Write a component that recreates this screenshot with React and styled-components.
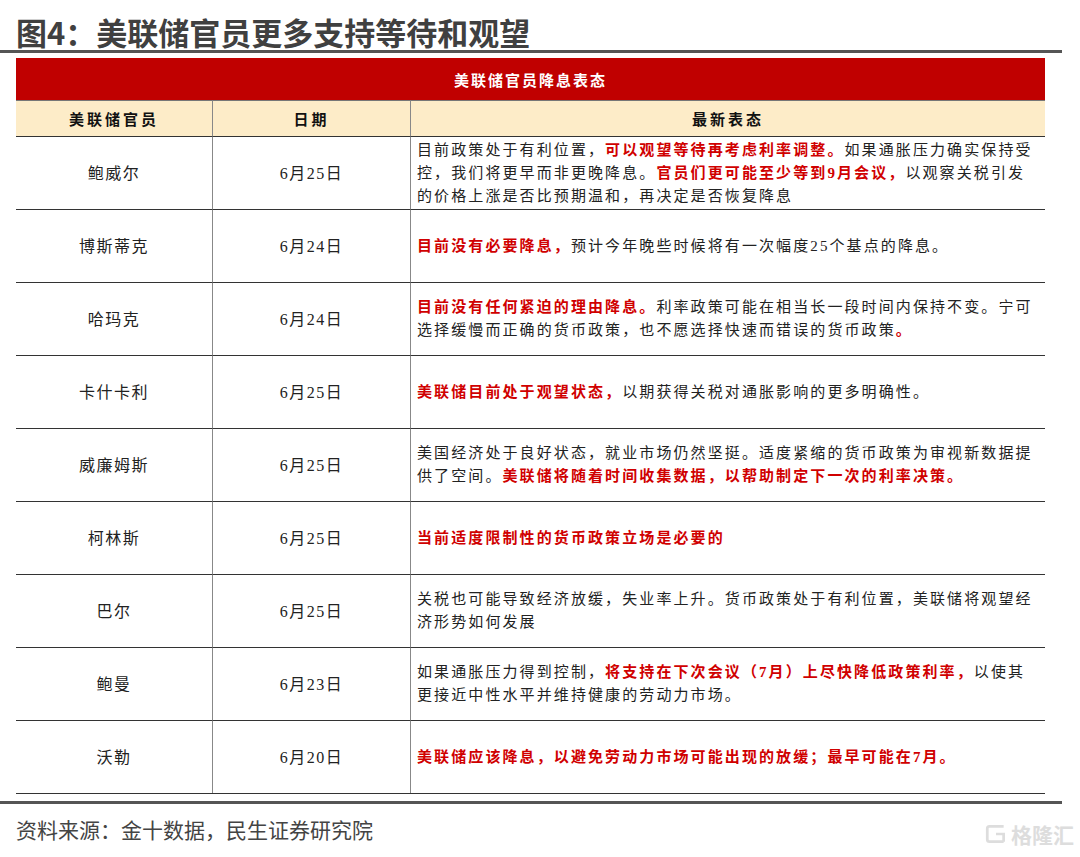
import styled, { createGlobalStyle } from "styled-components";

const Global = createGlobalStyle`
  body { margin: 0; background: #fff; font-family: "Liberation Serif", "Noto Sans CJK SC", serif; }
`;

const rows = [
  ["鲍威尔", "6月25日", [["目前政策处于有利位置，"], ["可以观望等待再考虑利率调整。", 1], ["如果通胀压力确实保持受控，我们将更早而非更晚降息。"], ["官员们更可能至少等到9月会议，", 1], ["以观察关税引发的价格上涨是否比预期温和，再决定是否恢复降息"]]],
  ["博斯蒂克", "6月24日", [["目前没有必要降息，", 1], ["预计今年晚些时候将有一次幅度25个基点的降息。"]]],
  ["哈玛克", "6月24日", [["目前没有任何紧迫的理由降息。", 1], ["利率政策可能在相当长一段时间内保持不变。宁可选择缓慢而正确的货币政策，也不愿选择快速而错误的货币政策"], ["。", 1]]],
  ["卡什卡利", "6月25日", [["美联储目前处于观望状态，", 1], ["以期获得关税对通胀影响的更多明确性。"]]],
  ["威廉姆斯", "6月25日", [["美国经济处于良好状态，就业市场仍然坚挺。适度紧缩的货币政策为审视新数据提供了空间。"], ["美联储将随着时间收集数据，以帮助制定下一次的利率决策。", 1]]],
  ["柯林斯", "6月25日", [["当前适度限制性的货币政策立场是必要的", 1]]],
  ["巴尔", "6月25日", [["关税也可能导致经济放缓，失业率上升。货币政策处于有利位置，美联储将观望经济形势如何发展"]]],
  ["鲍曼", "6月23日", [["如果通胀压力得到控制，"], ["将支持在下次会议（7月）上尽快降低政策利率，", 1], ["以使其更接近中性水平并维持健康的劳动力市场。"]]],
  ["沃勒", "6月20日", [["美联储应该降息，以避免劳动力市场可能出现的放缓；最早可能在7月。", 1]]],
];

const Page = styled.div`
  width: 1080px; height: 857px; position: relative; overflow: hidden;
`;
const Title = styled.h1`
  margin: 0; padding: 13px 0 0 16px; height: 37px;
  font: 700 31px "Noto Sans CJK SC", sans-serif; color: #404040; line-height: 37px;
`;
const Rule = styled.div`
  margin-top: ${p => p.$top}px; width: 1062px; height: 3px; background: #555;
`;
const Table = styled.div`
  margin: 5px 0 0 16px; width: 1029px;
  display: grid; grid-template-columns: 196px 198px 635px;
  border-bottom: 1px solid #333;
`;
const Banner = styled.div`
  grid-column: 1 / 4; height: 42px; background: #c00000; color: #fff;
  display: flex; align-items: center; justify-content: center;
  font: 700 15px "Noto Sans CJK SC", serif; letter-spacing: 2px;
`;
const Head = styled.div`
  height: 35px; background: #fdecc8; border-top: 1px solid #777;
  border-left: ${p => (p.$first ? "none" : "1px solid #888")};
  display: flex; align-items: center; justify-content: center;
  font: 700 15px "Noto Sans CJK SC", serif; letter-spacing: 3px; color: #111;
`;
const Cell = styled.div`
  height: 72px; border-top: 1px solid #333;
  border-left: ${p => (p.$first ? "none" : "1px solid #888")};
  display: flex; align-items: center;
  justify-content: ${p => (p.$left ? "flex-start" : "center")};
  padding: ${p => (p.$left ? "0 6px" : "0")};
  font-size: ${p => (p.$left ? 15 : 16)}px; line-height: 23px; color: #222;
  letter-spacing: ${p => (p.$left ? "2.1px" : "1.5px")};
`;
const Text = styled.p`
  margin: 0;
`;
const Red = styled.b`
  color: #d00000; font-weight: 700;
`;
const Source = styled.div`
  padding: 10px 0 0 16px; font: 21px "Noto Sans CJK SC", sans-serif; color: #444;
`;
const Logo = styled.div`
  position: absolute; right: 6px; bottom: 8px; display: flex; align-items: center; gap: 3px;
  font: 700 21px "Noto Sans CJK SC", sans-serif; color: #ddd;
`;

export default function App() {
  return (
    <Page>
      <Global />
      <Title>图4：美联储官员更多支持等待和观望</Title>
      <Rule $top={0} />
      <Table>
        <Banner>美联储官员降息表态</Banner>
        <Head $first>美联储官员</Head>
        <Head>日期</Head>
        <Head>最新表态</Head>
        {rows.map(([name, date, parts]) => [
          <Cell $first key={name + "n"}>{name}</Cell>,
          <Cell key={name + "d"}>{date}</Cell>,
          <Cell $left key={name + "t"}>
            <Text>{parts.map(([t, r]) => (r ? <Red key={t}>{t}</Red> : t))}</Text>
          </Cell>,
        ])}
      </Table>
      <Rule $top={7} />
      <Source>资料来源：金十数据，民生证券研究院</Source>
      <Logo>
        <svg width="24" height="24" viewBox="0 0 22 22" fill="none" stroke="#ddd" strokeWidth="2.5">
          <path d="M18 4H5a2 2 0 0 0-2 2v10a2 2 0 0 0 2 2h13M11 11h7v7" />
        </svg>
        格隆汇
      </Logo>
    </Page>
  );
}
